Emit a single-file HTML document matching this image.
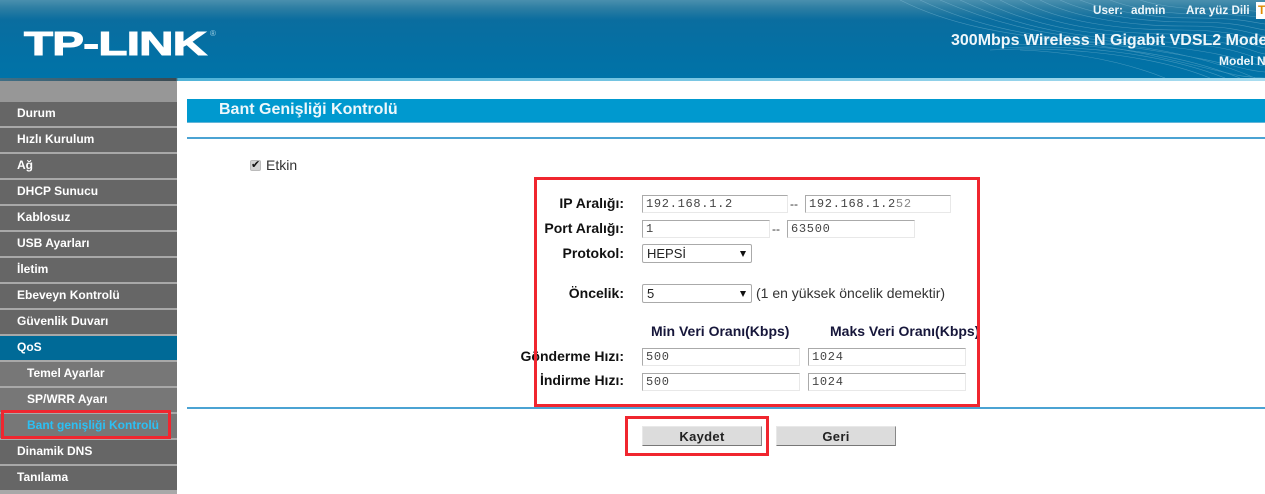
<!DOCTYPE html>
<html lang="tr"><head><meta charset="utf-8"><title>TP-LINK</title>
<style>
*{box-sizing:border-box}
html,body{margin:0;padding:0;width:1265px;height:494px;overflow:hidden;background:#fff;font-family:"Liberation Sans",Arial,sans-serif}
.a{position:absolute;white-space:nowrap}
#hd{position:absolute;left:0;top:0;width:1265px;height:78px;background:linear-gradient(#4a8fae 0,#2d7ea3 8px,#0a6d9f 20px,#0470a4 50px,#0073a8 78px);overflow:hidden}
.ht{color:#eef6fa;font-weight:bold}
.m{position:absolute;left:0;width:177px;height:24px;background:#666;color:#fff;font-weight:bold;font-size:12px;line-height:22px;padding-left:17px;white-space:nowrap}
.s{background:#777;padding-left:27px}
.lb{position:absolute;font-size:14px;line-height:16px;font-weight:bold;color:#111;text-align:right;width:140px;left:484px;white-space:nowrap}
.in{position:absolute;height:18px;background:#fff;border:1px solid #e8e8e8;border-top:1px solid #aaa;border-left:1px solid #aaa;font:12px/17px "Liberation Mono",monospace;color:#444;padding-left:3px;letter-spacing:.7px;white-space:nowrap}
.sel{position:absolute;left:642px;width:110px;height:19px;background:#fff;border:1px solid #aaa;border-radius:2px;font-size:13px;line-height:17px;padding-left:4px;color:#222}
.sel i{position:absolute;left:97px;top:6px;width:0;height:0;border-left:3.5px solid transparent;border-right:3.5px solid transparent;border-top:6px solid #111}
.t{position:absolute;font-size:12px;color:#333;white-space:nowrap}
.th{position:absolute;font-size:14px;line-height:16px;font-weight:bold;color:#16163a;white-space:nowrap}
.btn{position:absolute;top:426px;width:120px;height:20px;background:#dcdcdc;border:1px solid #e8e8e8;border-right:1px solid #888;border-bottom:1px solid #777;font-size:13px;font-weight:bold;line-height:19px;text-align:center;color:#222;letter-spacing:.3px}
.red{position:absolute;border:3px solid #f0262f}
</style></head><body>
<div id="hd">
<svg width="1265" height="78" style="position:absolute;left:0;top:0" fill="none" stroke="#8fc4da" stroke-width=".6" opacity=".45">
<path d="M900 0C980 40 1060 35 1150 55S1230 76 1265 78"/><path d="M920 0C1000 38 1070 38 1150 50S1240 70 1265 72"/><path d="M940 0C1020 35 1080 38 1160 46S1245 64 1265 66"/><path d="M960 0C1030 33 1090 38 1165 42S1250 58 1265 60"/><path d="M980 0C1040 30 1100 36 1170 38S1250 52 1265 54"/><path d="M1000 0C1050 26 1110 34 1175 34S1250 46 1265 48"/><path d="M1020 0C1060 22 1120 30 1180 30S1250 40 1265 42"/><path d="M1040 0C1075 18 1130 26 1185 26S1250 34 1265 36"/><path d="M1060 0C1090 14 1140 22 1190 22S1250 28 1265 30"/><path d="M1080 0C1105 10 1150 18 1195 18S1250 22 1265 24"/><path d="M1110 0C1130 8 1165 14 1200 14S1250 16 1265 18"/><path d="M1140 0C1155 5 1180 9 1210 9S1250 11 1265 12"/>
<path d="M1010 45C1080 42 1170 50 1240 78"/><path d="M1000 48C1070 44 1160 52 1225 78"/><path d="M990 50C1060 46 1150 54 1210 78"/><path d="M1040 40C1110 40 1190 50 1255 78"/><path d="M1020 50C1070 52 1120 60 1165 78"/>
</svg>
<div class="a" style="left:24px;top:26px;font-size:33px;line-height:36px;font-weight:bold;color:#fff;-webkit-text-stroke:1px #fff;transform:scaleX(1.44);transform-origin:0 0;letter-spacing:-.5px">TP-LINK</div>
<div class="a" style="left:210px;top:30px;font-size:8px;line-height:8px;color:#9fd0e4">®</div>
<div class="a ht" style="left:1093px;top:4px;font-size:11.7px;line-height:14px">User:</div>
<div class="a ht" style="left:1131px;top:4px;font-size:11.7px;line-height:14px">admin</div>
<div class="a ht" style="left:1186px;top:4px;font-size:11.7px;line-height:14px">Ara yüz Dili</div>
<div class="a" style="left:1256px;top:2px;width:12px;height:17px;background:#fff;color:#e08a00;font-size:12px;line-height:17px;font-weight:bold;padding-left:2px">T</div>
<div class="a ht" style="left:951px;top:32px;font-size:16px;line-height:18px">300Mbps Wireless N Gigabit VDSL2 Modem</div>
<div class="a ht" style="left:1219px;top:54px;font-size:12px;line-height:14px">Model No</div>
</div>
<div class="a" style="left:0;top:78px;width:1265px;height:3px;background:linear-gradient(90deg,#3f6f86 0,#3b4a52 176px,#4fb3d8 178px,#a9dcef 1265px)"></div>
<div class="a" style="left:0;top:81px;width:177px;height:413px;background:#a8a8a8"></div>
<div class="a" style="left:0;top:81px;width:177px;height:21px;background:#979797"></div>
<div class="m" style="top:102px">Durum</div>
<div class="m" style="top:128px">Hızlı Kurulum</div>
<div class="m" style="top:154px">Ağ</div>
<div class="m" style="top:180px">DHCP Sunucu</div>
<div class="m" style="top:206px">Kablosuz</div>
<div class="m" style="top:232px">USB Ayarları</div>
<div class="m" style="top:258px">İletim</div>
<div class="m" style="top:284px">Ebeveyn Kontrolü</div>
<div class="m" style="top:310px">Güvenlik Duvarı</div>
<div class="m" style="top:336px;background:#006a97">QoS</div>
<div class="m s" style="top:362px">Temel Ayarlar</div>
<div class="m s" style="top:388px">SP/WRR Ayarı</div>
<div class="m s" style="top:414px;color:#2bc0f4">Bant genişliği Kontrolü</div>
<div class="m" style="top:440px">Dinamik DNS</div>
<div class="m" style="top:466px">Tanılama</div>
<div class="red" style="left:1px;top:410px;width:170px;height:29px"></div>

<div class="a" style="left:187px;top:99px;width:1078px;height:24px;background:#0099cf;border-bottom:1px solid #63b5d8"></div>
<div class="a" style="left:219px;top:100px;font-size:16px;line-height:20px;font-weight:bold;color:#eef8fc">Bant Genişliği Kontrolü</div>
<div class="a" style="left:187px;top:137px;width:1078px;height:2px;background:#4ba3d3"></div>
<div class="a" style="left:250px;top:160px;width:11px;height:11px;background:#d4d4d4;border:1px solid #bbb;border-radius:2px;color:#111;font-size:11px;line-height:9px;text-align:center">✔</div>
<div class="t" style="left:266px;top:157px;font-size:14px;line-height:16px">Etkin</div>

<div class="lb" style="top:195px">IP Aralığı:</div>
<div class="in" style="left:642px;top:195px;width:146px">192.168.1.2</div>
<div class="t" style="left:790px;top:197px">--</div>
<div class="in" style="left:805px;top:195px;width:146px">192.168.1.2<span style="color:#888">52</span></div>
<div class="lb" style="top:220px">Port Aralığı:</div>
<div class="in" style="left:642px;top:220px;width:128px">1</div>
<div class="t" style="left:772px;top:222px">--</div>
<div class="in" style="left:787px;top:220px;width:128px">63500</div>
<div class="lb" style="top:245px">Protokol:</div>
<div class="sel" style="top:244px">HEPSİ<i></i></div>
<div class="lb" style="top:285px">Öncelik:</div>
<div class="sel" style="top:284px">5<i></i></div>
<div class="t" style="left:756px;top:285px;font-size:14px;line-height:16px">(1 en yüksek öncelik demektir)</div>
<div class="th" style="left:651px;top:323px">Min Veri Oranı(Kbps)</div>
<div class="th" style="left:830px;top:323px">Maks Veri Oranı(Kbps)</div>
<div class="lb" style="top:348px">Gönderme Hızı:</div>
<div class="in" style="left:642px;top:348px;width:158px">500</div>
<div class="in" style="left:808px;top:348px;width:158px">1024</div>
<div class="lb" style="top:372px">İndirme Hızı:</div>
<div class="in" style="left:642px;top:373px;width:158px">500</div>
<div class="in" style="left:808px;top:373px;width:158px">1024</div>
<div class="red" style="left:534px;top:177px;width:446px;height:230px"></div>
<div class="a" style="left:187px;top:407px;width:1078px;height:2px;background:#4ba3d3"></div>
<div class="btn" style="left:642px">Kaydet</div>
<div class="btn" style="left:776px">Geri</div>
<div class="red" style="left:625px;top:416px;width:144px;height:40px"></div>
</body></html>
